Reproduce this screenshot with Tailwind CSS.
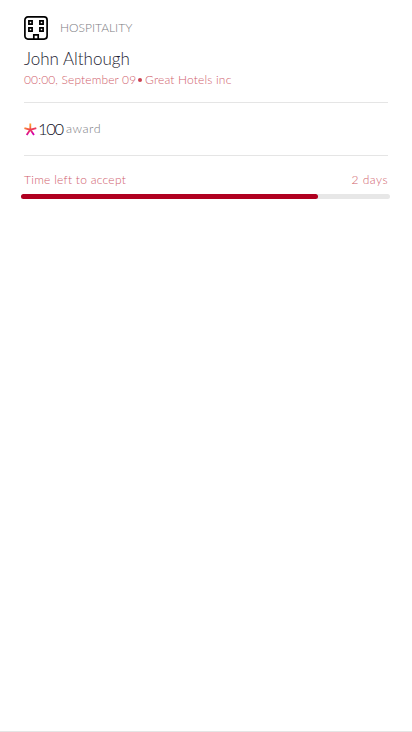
<!DOCTYPE html>
<html lang="en">
<head>
<meta charset="utf-8">
<title>Offer</title>
<script src="https://cdn.jsdelivr.net/npm/@tailwindcss/browser@4"></script>
</head>
<body class="bg-white">
<main class="flex h-[732px] w-[412px] flex-col overflow-hidden border-b border-[#e5e5e5] px-6 pt-4 font-['Lato','Open_Sans',sans-serif] font-light whitespace-nowrap">
  <header class="flex h-6 items-center gap-3">
    <svg class="size-6 shrink-0" viewBox="0 0 24 24" fill="none" stroke="#000" stroke-width="1.7">
      <rect x=".9" y=".9" width="22.2" height="22.2" rx="3"/>
      <path d="M4.9 4.9h3.2v3.2H4.9zM15.9 4.9h3.2v3.2h-3.2zM4.9 11.9h3.2v3.2H4.9zM15.9 11.9h3.2v3.2h-3.2zM9.8 23v-4.1h4.4V23"/>
    </svg>
    <span class="text-[12px] leading-6 text-[#7c7c83]">HOSPITALITY</span>
  </header>
  <h1 class="mt-2 h-[21px] text-[17px] leading-[21px] text-[#1e1e32]">John Although</h1>
  <p class="mt-[3px] flex h-4 items-center text-[12px] leading-4 text-[#d0606c]">
    <span class="w-[114px] tracking-[0.13px]">00:00, September 09</span>
    <span class="mr-[3px] size-[4px] rounded-full bg-[#cb4352]"></span>
    <span class="tracking-[0.17px]">Great Hotels inc</span>
  </p>
  <section class="mt-[14px] flex h-[54px] items-center border-y border-[#e5e5e5]">
    <svg class="size-[13px] shrink-0" viewBox="0 0 13 13" fill="none">
      <defs><linearGradient id="flare" x1="3" y1="1" x2="7" y2="13" gradientUnits="userSpaceOnUse"><stop offset=".15" stop-color="#ff9d2e"/><stop offset=".5" stop-color="#ef4052"/><stop offset=".85" stop-color="#d500a8"/></linearGradient></defs>
      <path d="M6.3 .5V6.2M.4 5.2L6.3 6.7L12.3 5.2M6.3 6.5L2.7 12.1M6.3 6.5L10 12.1" stroke="url(#flare)" stroke-width="1.8"/>
    </svg>
    <span class="ml-px w-[28px] text-[16.5px] leading-5 tracking-[-1.3px] text-[#101024]">100</span>
    <span class="text-[12.5px] leading-4 tracking-[0.5px] text-[#7c7c83]">award</span>
  </section>
  <div class="mt-4 flex h-4 items-center justify-between text-[12px] leading-4 text-[#d0606c]">
    <span class="tracking-[0.27px]">Time left to accept</span>
    <span class="tracking-[0.5px]">2 days</span>
  </div>
  <div class="-mr-[2px] -ml-[3px] mt-[6px] h-[5px] shrink-0 rounded-full bg-[#e7e7e7]">
    <div class="h-full rounded-full bg-[#b00020]" style="width:80.4%"></div>
  </div>
</main>
</body>
</html>
